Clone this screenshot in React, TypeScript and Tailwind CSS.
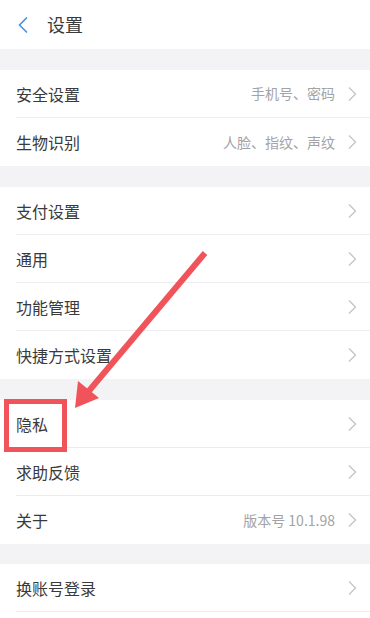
import React from "react";

const Chevron = () => (
  <svg width="10" height="16" viewBox="0 0 10 16" className="shrink-0">
    <path d="M2 1.5 L8.5 8 L2 14.5" fill="none" stroke="#c4c4c8" strokeWidth="1.3" />
  </svg>
);

type Item = { label: string; value?: string };

const Row = ({ item, last }: { item: Item; last?: boolean }) => (
  <div className="bg-white pl-4">
    <div className={`flex h-12 items-center pr-[13px] ${last ? "" : "border-b border-[#ececee]"}`}>
      <span className="flex-1 text-[16px] text-[#3a3a3a]">{item.label}</span>
      {item.value && <span className="mr-[12px] text-[14px] text-[#a3a3a6]">{item.value}</span>}
      <Chevron />
    </div>
  </div>
);

const Group = ({ items }: { items: Item[] }) => (
  <div className="flex flex-col">
    {items.map((it, i) => (
      <Row key={it.label} item={it} last={i === items.length - 1} />
    ))}
  </div>
);

export default function App() {
  return (
    <div
      className="relative h-[618px] w-[370px] overflow-hidden bg-white"
      style={{ fontFamily: '"Noto Sans CJK SC", "Noto Sans", sans-serif' }}
    >
      <div className="flex h-[49px] items-center bg-white pl-[17px]">
        <svg width="12" height="18" viewBox="0 0 12 18">
          <path d="M10 1.5 L2.5 9 L10 16.5" fill="none" stroke="#4a8fe0" strokeWidth="1.6" />
        </svg>
        <span className="ml-[18px] text-[18px] text-[#3a3a3a]">设置</span>
      </div>
      <div className="h-[21px] bg-[#f3f3f5]" />
      <Group
        items={[
          { label: "安全设置", value: "手机号、密码" },
          { label: "生物识别", value: "人脸、指纹、声纹" },
        ]}
      />
      <div className="h-[21px] bg-[#f3f3f5]" />
      <Group
        items={[
          { label: "支付设置" },
          { label: "通用" },
          { label: "功能管理" },
          { label: "快捷方式设置" },
        ]}
      />
      <div className="h-[21px] bg-[#f3f3f5]" />
      <Group
        items={[
          { label: "隐私" },
          { label: "求助反馈" },
          { label: "关于", value: "版本号 10.1.98" },
        ]}
      />
      <div className="h-[20px] bg-[#f3f3f5]" />
      <div className="bg-white pl-4">
        <div className="flex h-12 items-center border-b border-[#ececee] pr-[13px]">
          <span className="flex-1 text-[16px] text-[#3a3a3a]">换账号登录</span>
          <Chevron />
        </div>
      </div>

      <div className="absolute left-[4px] top-[399px] h-[53px] w-[63px] border-[5px] border-[#f0545a]" />
      <svg className="pointer-events-none absolute left-0 top-0" width="370" height="618" viewBox="0 0 370 618">
        <line x1="205" y1="253" x2="88" y2="392" stroke="#f0545a" strokeWidth="6" strokeLinecap="butt" />
        <polygon points="75,408 78,381 99,398" fill="#f0545a" />
      </svg>
    </div>
  );
}
